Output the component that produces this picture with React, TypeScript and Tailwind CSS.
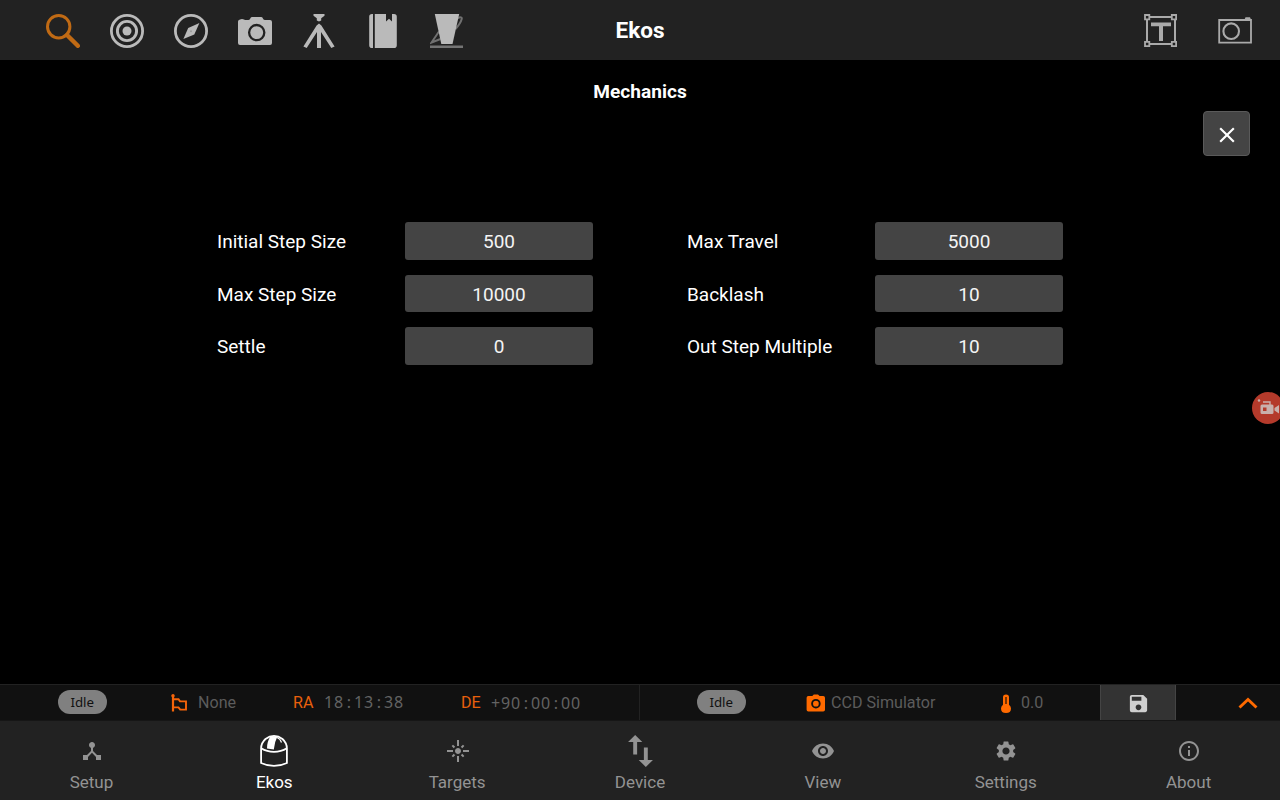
import type { ReactNode } from "react";
import { MdClose, MdDeviceHub, MdFlare, MdInfoOutline, MdSave, MdSettings, MdVisibility } from "react-icons/md";

function ToolIcon({ children, className = "text-[#bababa]" }: { children: ReactNode; className?: string }) {
  return (
    <button className={"block size-[34px] " + className}>
      <svg viewBox="0 0 34 34" className="block size-[34px]" fill="currentColor">
        {children}
      </svg>
    </button>
  );
}

function Header() {
  return (
    <header className="grid h-[60px] grid-cols-[1fr_auto_1fr] items-center bg-[#222222]">
      <div className="flex gap-[30px] pt-[2px] pl-[46px]">
        <ToolIcon className="text-[#c06a14]">
          <circle cx="12.7" cy="12.7" r="11.2" fill="none" stroke="currentColor" strokeWidth="3" />
          <path d="M21 21L31.8 31.8" stroke="currentColor" strokeWidth="4.4" strokeLinecap="round" />
        </ToolIcon>
        <ToolIcon>
          <circle cx="17" cy="17" r="15.6" fill="none" stroke="currentColor" strokeWidth="2.8" />
          <circle cx="17" cy="17" r="9.6" fill="none" stroke="currentColor" strokeWidth="2.9" />
          <circle cx="17" cy="17" r="4.5" />
        </ToolIcon>
        <ToolIcon>
          <circle cx="17" cy="17" r="15.6" fill="none" stroke="currentColor" strokeWidth="2.8" />
          <path d="M25.4 9L20.3 20.4L9.4 24.9L14.2 13.9Z" />
          <circle cx="17" cy="17.2" r="1" fill="#999999" />
        </ToolIcon>
        <ToolIcon>
          <path d="M0 8.5V7.5Q0 5.8 2 5.4Q4 4.6 6 5.4L7 6H10.5Q12 5.6 12.4 4.2Q12.8 3 14.2 3H23Q24.4 3 24.8 4.2Q25.3 6 26.8 6H32Q34 6 34 8V29Q34 31 32 31H2Q0 31 0 29Z" />
          <circle cx="18.7" cy="18.6" r="7.6" fill="none" stroke="#222222" strokeWidth="2.3" />
        </ToolIcon>
        <ToolIcon>
          <path d="M11.5 0H22.5V1.8L19.2 4.2V6.5L17 7.6L14.8 6.5V4.2L11.5 1.8Z" />
          <path d="M17 9.5L19.4 11.6L32.6 32.6L29.3 34L19 18V34H15V18L4.7 34L1.4 32.6L14.6 11.6Z" />
        </ToolIcon>
        <ToolIcon>
          <path d="M7 0V34H6Q3.2 34 3.2 31.2V2.8Q3.2 0 6 0ZM8.8 0H20V7.5L23 4.8L26 7.5V0H28Q30.8 0 30.8 2.8V31.2Q30.8 34 28 34H8.8Z" />
        </ToolIcon>
        <ToolIcon>
          <path d="M9 17.5L1.5 28.5L10.5 25" fill="none" stroke="#707070" strokeWidth="2" />
          <path d="M27 4.5Q32.5 2 31.7 5Q30.5 9.5 25.5 15" fill="none" stroke="#707070" strokeWidth="2" />
          <path d="M4.8 0H29.2L22.5 30H11.3Z" />
          <path d="M0 31.6H33V34H0Z" fill="#747474" />
        </ToolIcon>
      </div>
      <h1 className="pt-[2px] text-[22.6px] leading-none font-bold text-white">Ekos</h1>
      <div className="flex justify-end gap-[40px] pt-[2px] pr-[28px]">
        <ToolIcon className="text-[#aaaaaa]">
          <path d="M3 3H31V30H3Z" fill="none" stroke="currentColor" strokeWidth="2" />
          <g fill="#222222" stroke="currentColor" strokeWidth="1.8">
            <path d="M1 1H5.3V5.3H1ZM27.8 1H32.1V5.3H27.8ZM1 27.8H5.3V32.1H1ZM27.8 27.8H32.1V32.1H27.8Z" />
          </g>
          <path d="M7 8.5H27V12.3H19V27H15V12.3H7Z" />
        </ToolIcon>
        <ToolIcon className="text-[#aaaaaa]">
          <path d="M1.2 6H33V28.7H1.2Z" fill="none" stroke="currentColor" strokeWidth="1.8" />
          <circle cx="13.2" cy="17.2" r="7.8" fill="none" stroke="currentColor" strokeWidth="2.1" />
          <path d="M26.5 5.5L27.5 3.2H32L33 5.5Z" />
        </ToolIcon>
      </div>
    </header>
  );
}

function Field({ label, value }: { label: string; value: string }) {
  return (
    <label className="grid grid-cols-2 items-center">
      <span className="pt-[2.8px] whitespace-nowrap">{label}</span>
      <span className="flex h-[37.6px] items-center justify-center rounded-[3px] bg-[#444444] pt-[2.8px] text-[#f4f4f4]">{value}</span>
    </label>
  );
}

function Idle() {
  return (
    <span className="mb-[2px] flex h-6 w-[48.5px] shrink-0 items-center justify-center rounded-full bg-[#808080] pt-[2px] font-['Noto_Sans',sans-serif] text-[13.3px] text-[#111111]">
      Idle
    </span>
  );
}

function Clock({ parts }: { parts: string[] }) {
  return (
    <span className="font-['Noto_Sans',sans-serif] text-[16px] text-[#636363]">
      {parts.map((p, i) => (
        <span key={i}>
          {i > 0 && <span className="inline-block w-[10px] text-center">:</span>}
          <span className="tracking-[0.84px]">{p}</span>
        </span>
      ))}
    </span>
  );
}

function StatusBar() {
  return (
    <div className="flex h-[37px] border-t border-b border-t-[#222222] border-b-[#161616] bg-[#111111] text-[16.1px] text-[#5c5c5c]">
      <div className="flex w-[640px] items-center border-r border-[#222222] pl-[58px]">
        <Idle />
        <svg viewBox="0 0 17 18" className="ml-[64.5px] h-[18px] w-[17px] text-[#f4640a]" fill="none" stroke="currentColor" strokeWidth="1.9">
          <path d="M2 1V17.5" strokeWidth="2.2" />
          <circle cx="2" cy="1.8" r="1.7" fill="currentColor" stroke="none" />
          <path d="M2 5.2H7.5L9 7.4H15V15.6H9.2L7.5 13.4H2" />
        </svg>
        <span className="ml-[10px] w-[95px] pt-[2px]">None</span>
        <span className="w-[31px] pt-[2px] text-[#e8600c]">RA</span>
        <span className="w-[137px]"><Clock parts={["18", "13", "38"]} /></span>
        <span className="w-[30px] pt-[2px] text-[#e8600c]">DE</span>
        <Clock parts={["+90", "00", "00"]} />
      </div>
      <div className="flex w-[460px] items-center pl-[57px]">
        <Idle />
        <svg viewBox="0 0 20 18" className="ml-[60.5px] h-[18px] w-5 text-[#ff6a00]" fill="currentColor">
          <path d="M6.3 2L7.8 .6H12L13.6 2H17.2Q19 2 19 3.8V15.8Q19 17.6 17.2 17.6H2.3Q.6 17.6 .6 15.8V3.8Q.6 2 2.3 2Z" />
          <circle cx="9.9" cy="9.7" r="3.8" fill="none" stroke="#111111" strokeWidth="1.9" />
        </svg>
        <span className="ml-[5px] w-[169px] pt-[2px]">CCD Simulator</span>
        <svg viewBox="0 0 12 20" className="mt-[2px] h-5 w-3 text-[#ff6a00]" fill="currentColor">
          <path d="M3 3.2Q3 .5 6 .5T9 3.2V10.8Q11 12.3 11 14.5Q11 19 6 19T1 14.5Q1 12.3 3 10.8Z" />
          <path d="M6 3V10" stroke="#5a2600" strokeWidth="1.6" />
        </svg>
        <span className="ml-[9px] pt-[2px]">0.0</span>
      </div>
      <button className="flex w-[76px] items-center justify-center border-x border-[#444444] bg-[#333333] pt-[2px] text-[#d0d0d0]">
        <MdSave size={23} />
      </button>
      <button className="flex flex-1 items-center justify-end pr-[22px] text-[#ff6a00]">
        <svg viewBox="0 0 20 12" className="h-3 w-5" fill="none" stroke="currentColor" strokeWidth="2.9">
          <path d="M1.5 10.5L10 2.5L18.5 10.5" />
        </svg>
      </button>
    </div>
  );
}

const tabs: { label: string; icon: ReactNode; active?: boolean }[] = [
  { label: "Setup", icon: <MdDeviceHub size={24} /> },
  {
    label: "Ekos",
    active: true,
    icon: (
      <svg viewBox="0 0 28 32" className="mr-[2px] h-8 w-7" fill="none" stroke="currentColor" strokeWidth="1.8">
        <path d="M1.1 15V28Q7 30.9 14 30.9T26.9 28V13.5Q26.9 8 22.5 4Q18.5 .9 14 .9T5.5 4Q1.1 8 1.1 13.5Z" />
        <path d="M1.2 13.2Q7 16.8 14 16.8T26.8 13.2" />
        <path d="M10.5 1.3H17.5Q14.5 7 13.8 14.4L7 13.4Q7 6.5 10.5 1.3Z" fill="currentColor" stroke="none" />
        <path d="M17 2.5Q20.5 4 21.5 7.5" strokeWidth="1.2" />
      </svg>
    ),
  },
  { label: "Targets", icon: <MdFlare size={24} /> },
  {
    label: "Device",
    icon: (
      <svg viewBox="5 3 14 18" className="h-8 w-[25px]" fill="currentColor">
        <path d="M16.1 17V10h-2.2v7H11l4 4 4-4zM9 3L5 7h2.9v7h2.2V7H13z" />
      </svg>
    ),
  },
  { label: "View", icon: <MdVisibility size={24} /> },
  { label: "Settings", icon: <MdSettings size={24} /> },
  { label: "About", icon: <MdInfoOutline size={24} /> },
];

export default function App() {
  return (
    <div className="relative flex h-[800px] w-[1280px] flex-col overflow-hidden bg-black font-[Roboto,sans-serif] text-white">
      <Header />
      <main className="flex flex-1 flex-col">
        <h2 className="mt-5 text-center text-[19.1px] leading-6 font-bold">Mechanics</h2>
        <button className="mt-[7px] mr-[30px] flex h-[45px] w-[47px] items-center justify-center self-end rounded-[4px] border border-[#5a5a5a] bg-[#444444] pt-[3px]">
          <MdClose size={26} />
        </button>
        <section className="mt-[66px] grid grid-cols-2 gap-x-[94px] gap-y-[15px] px-[217px] text-[19px]">
          <Field label="Initial Step Size" value="500" />
          <Field label="Max Travel" value="5000" />
          <Field label="Max Step Size" value="10000" />
          <Field label="Backlash" value="10" />
          <Field label="Settle" value="0" />
          <Field label="Out Step Multiple" value="10" />
        </section>
      </main>
      <StatusBar />
      <nav className="grid h-[79px] grid-cols-7 bg-[#222222] text-[17px]">
        {tabs.map((t) => (
          <button key={t.label} className={t.active ? "flex flex-col items-center pt-3 text-white" : "flex flex-col items-center pt-3 text-[#939393]"}>
            <span className="flex h-9 items-center justify-center pl-px">{t.icon}</span>
            <span className="mt-[3px] leading-5">{t.label}</span>
          </button>
        ))}
      </nav>
      <button className="absolute top-[392px] left-[1252px] size-8 rounded-full bg-[#b43a2b] text-[#c9b0ac]">
        <svg viewBox="0 0 32 32" className="size-8" fill="currentColor">
          <circle cx="7" cy="8.5" r="1.2" />
          <path d="M11 10H18V13" fill="none" stroke="currentColor" strokeWidth="1.4" />
          <path d="M10 12.5H20Q21.5 12.5 21.5 14V20.5Q21.5 22 20 22H10Q8.5 22 8.5 20.5V14Q8.5 12.5 10 12.5ZM22.5 16L27 13V21.5L22.5 18.5Z" />
          <path d="M11 15.5H14.5V19H11Z" fill="#b43a2b" />
        </svg>
      </button>
    </div>
  );
}
